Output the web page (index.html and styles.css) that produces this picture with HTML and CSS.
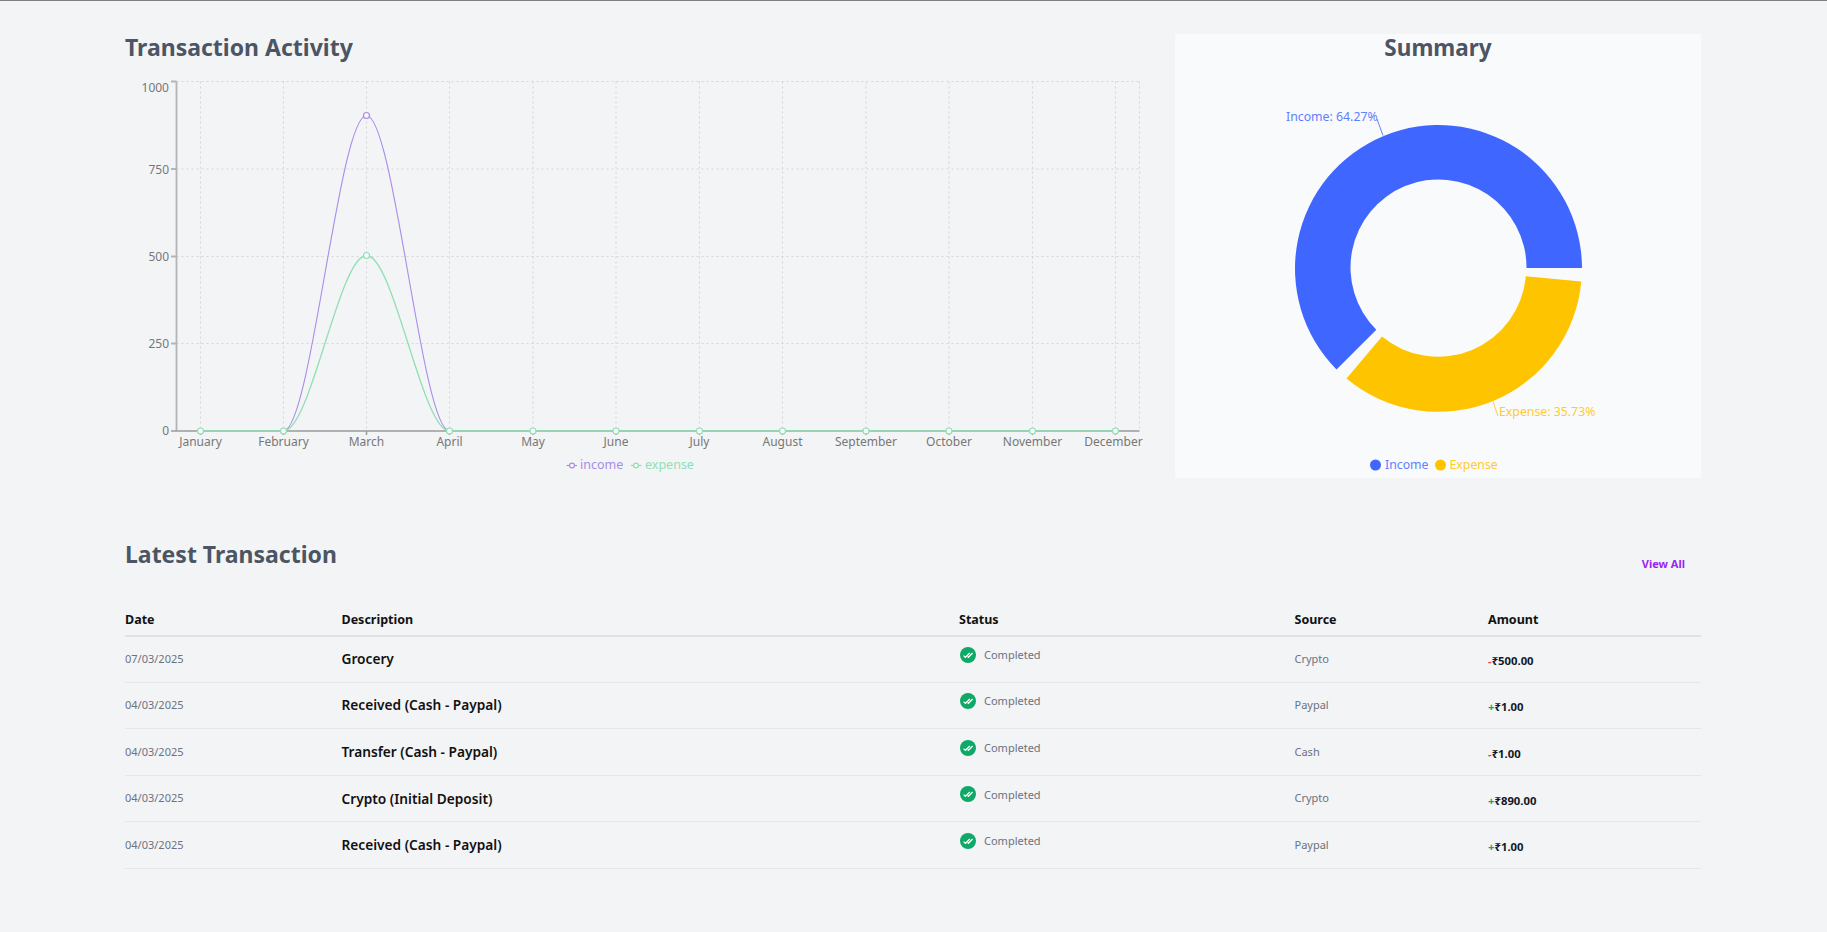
FILE: index.html
```html
<!DOCTYPE html>
<html lang="en">
<head>
<meta charset="utf-8">
<title>Dashboard</title>
<link rel="stylesheet" href="styles.css">
</head>
<body>
<main class="page">
  <section class="charts">
    <div class="activity">
      <h2 class="heading">Transaction Activity</h2>
      <svg class="line-chart" width="1030" height="420" viewBox="125 60 1030 420">
        <g class="grid">
          <path d="M176.5 81.5H1139.5M176.5 169H1139.5M176.5 256.5H1139.5M176.5 343.5H1139.5"/>
          <path d="M200.5 81.5V431M283.5 81.5V431M366.5 81.5V431M449.5 81.5V431M533 81.5V431M616 81.5V431M699.5 81.5V431M782.5 81.5V431M866 81.5V431M949 81.5V431M1032.5 81.5V431M1115.5 81.5V431M1139.5 81.5V431"/>
        </g>
        <g class="axis">
          <path class="axis-y" d="M176.5 81.5V431M171 81.5H176.5M171 169H176.5M171 256.5H176.5M171 343.5H176.5"/>
          <path class="axis-x" d="M171 431H1139.5M200.5 431V435M283.5 431V435M366.5 431V435M449.5 431V435M533 431V435M616 431V435M699.5 431V435M782.5 431V435M866 431V435M949 431V435M1032.5 431V435M1115.5 431V435"/>
        </g>
        <g class="ylabels">
          <text x="169" y="92">1000</text>
          <text x="169" y="174">750</text>
          <text x="169" y="261">500</text>
          <text x="169" y="348">250</text>
          <text x="169" y="435">0</text>
        </g>
        <g class="xlabels">
          <text x="200.5" y="446">January</text>
          <text x="283.5" y="446">February</text>
          <text x="366.5" y="446">March</text>
          <text x="449.5" y="446">April</text>
          <text x="533" y="446">May</text>
          <text x="616" y="446">June</text>
          <text x="699.5" y="446">July</text>
          <text x="782.5" y="446">August</text>
          <text x="866" y="446">September</text>
          <text x="949" y="446">October</text>
          <text x="1032.5" y="446">November</text>
          <text x="1113.5" y="446">December</text>
        </g>
        <path class="line income" d="M283.5 431C311 431 339 115.5 366.5 115.5C394 115.5 422 431 449.5 431"/>
        <path class="line expense" d="M200.5 431H283.5C311 431 339 255.5 366.5 255.5C394 255.5 422 431 449.5 431H1115.5"/>
        <circle class="dot income" cx="366.5" cy="115.5" r="3"/>
        <g class="dot expense">
          <circle cx="366.5" cy="255.5" r="3"/>
          <circle cx="200.5" cy="431" r="3"/>
          <circle cx="283.5" cy="431" r="3"/>
          <circle cx="449.5" cy="431" r="3"/>
          <circle cx="533" cy="431" r="3"/>
          <circle cx="616" cy="431" r="3"/>
          <circle cx="699.5" cy="431" r="3"/>
          <circle cx="782.5" cy="431" r="3"/>
          <circle cx="866" cy="431" r="3"/>
          <circle cx="949" cy="431" r="3"/>
          <circle cx="1032.5" cy="431" r="3"/>
          <circle cx="1115.5" cy="431" r="3"/>
        </g>
        <path class="line income" d="M566.5 465.5H577"/>
        <circle class="dot income" cx="572" cy="465.5" r="2.4"/>
        <text class="legend income-text" x="580" y="469">income</text>
        <path class="line expense" d="M631 465.5H641.5"/>
        <circle class="dot expense" cx="636" cy="465.5" r="2.4"/>
        <text class="legend expense-text" x="645" y="469">expense</text>
      </svg>
    </div>
    <aside class="summary">
      <h2 class="heading summary-title">Summary</h2>
      <svg class="donut" width="526" height="404" viewBox="1175 74 526 404">
        <path class="slice-income" d="M1582 268A143.5 143.5 0 1 0 1336.5 369.5L1376.3 329.7A88 88 0 1 1 1526.5 268Z"/>
        <path class="slice-expense" d="M1581.3 281.4A143.5 143.5 0 0 1 1346.5 378.5L1382 336.6A88 88 0 0 0 1525.8 276.2Z"/>
        <path class="leader-income" d="M1377 119L1383 135.5"/>
        <path class="leader-expense" d="M1493 401.5L1498 416"/>
        <text class="pie-label income-blue" x="1286" y="120.5">Income: 64.27%</text>
        <text class="pie-label expense-yellow" x="1499" y="416">Expense: 35.73%</text>
        <circle class="slice-income" cx="1375.5" cy="465" r="5.5"/>
        <text class="pie-label income-blue" x="1385" y="469">Income</text>
        <circle class="slice-expense" cx="1440.5" cy="465" r="5.5"/>
        <text class="pie-label expense-yellow" x="1449.5" y="469">Expense</text>
      </svg>
    </aside>
  </section>

  <section class="latest">
    <div class="latest-head">
      <h2 class="heading">Latest Transaction</h2>
      <a class="view-all" href="#">View All</a>
    </div>
    <table class="tx-table">
      <colgroup>
        <col class="col-date"><col class="col-desc"><col class="col-status"><col class="col-source"><col class="col-amount">
      </colgroup>
      <thead>
        <tr><th>Date</th><th>Description</th><th>Status</th><th>Source</th><th>Amount</th></tr>
      </thead>
      <tbody>
        <tr>
          <td class="muted">07/03/2025</td><td class="desc">Grocery</td>
          <td><span class="status"><svg class="check" viewBox="0 0 16 16"><circle cx="8" cy="8" r="8"/><path d="M3.6 8.6L5.4 10.4L9.8 6M7.6 9.6L8.4 10.4L12.6 6"/></svg>Completed</span></td>
          <td class="muted">Crypto</td><td class="amount"><span class="minus">-</span>₹500.00</td>
        </tr>
        <tr>
          <td class="muted">04/03/2025</td><td class="desc">Received (Cash - Paypal)</td>
          <td><span class="status"><svg class="check" viewBox="0 0 16 16"><circle cx="8" cy="8" r="8"/><path d="M3.6 8.6L5.4 10.4L9.8 6M7.6 9.6L8.4 10.4L12.6 6"/></svg>Completed</span></td>
          <td class="muted">Paypal</td><td class="amount"><span class="plus">+</span>₹1.00</td>
        </tr>
        <tr>
          <td class="muted">04/03/2025</td><td class="desc">Transfer (Cash - Paypal)</td>
          <td><span class="status"><svg class="check" viewBox="0 0 16 16"><circle cx="8" cy="8" r="8"/><path d="M3.6 8.6L5.4 10.4L9.8 6M7.6 9.6L8.4 10.4L12.6 6"/></svg>Completed</span></td>
          <td class="muted">Cash</td><td class="amount"><span class="minus">-</span>₹1.00</td>
        </tr>
        <tr>
          <td class="muted">04/03/2025</td><td class="desc">Crypto (Initial Deposit)</td>
          <td><span class="status"><svg class="check" viewBox="0 0 16 16"><circle cx="8" cy="8" r="8"/><path d="M3.6 8.6L5.4 10.4L9.8 6M7.6 9.6L8.4 10.4L12.6 6"/></svg>Completed</span></td>
          <td class="muted">Crypto</td><td class="amount"><span class="plus">+</span>₹890.00</td>
        </tr>
        <tr>
          <td class="muted">04/03/2025</td><td class="desc">Received (Cash - Paypal)</td>
          <td><span class="status"><svg class="check" viewBox="0 0 16 16"><circle cx="8" cy="8" r="8"/><path d="M3.6 8.6L5.4 10.4L9.8 6M7.6 9.6L8.4 10.4L12.6 6"/></svg>Completed</span></td>
          <td class="muted">Paypal</td><td class="amount"><span class="plus">+</span>₹1.00</td>
        </tr>
      </tbody>
    </table>
  </section>
</main>
</body>
</html>
```
FILE: styles.css
```css
* { box-sizing: border-box; }
html, body { margin: 0; height: 100%; }
body {
  background: #f3f4f6;
  border-top: 1px solid #808080;
  font-family: "Noto Sans", "Open Sans", sans-serif;
  color: #111;
  overflow: hidden;
}
.page { padding: 33px 126px 0 125px; }
.charts { display: flex; justify-content: space-between; }
.activity { width: 1030px; }
.heading {
  margin: 0;
  font-size: 23px;
  line-height: 26px;
  font-weight: 700;
  color: #4b5563;
}
.activity .heading { height: 26px; }
.line-chart, .donut { display: block; }
.summary { width: 526px; height: 444px; background: #f9fafb; }
.summary-title { text-align: center; height: 40px; font-size: 22.5px; line-height: 27px; }

.grid path { fill: none; stroke: #d6d6d6; stroke-width: 1.1; stroke-dasharray: 2 3; }
.axis path { fill: none; }
.axis-y { stroke: #b4b4b4; stroke-width: 1.8; }
.axis-x { stroke: #9a9a9a; stroke-width: 1.5; }
.ylabels text { font-size: 12px; fill: #777; text-anchor: end; }
.xlabels text { font-size: 12px; fill: #777; text-anchor: middle; }
.line { fill: none; stroke-width: 1.1; }
.line.expense { stroke-width: 1.3; }
.line.income { stroke: #a98be8; }
.line.expense { stroke: #8fe0b4; }
.dot { fill: #f8fafc; stroke-width: 1.2; }
.dot.income { stroke: #a98be8; }
.dot.expense { stroke: #8fe0b4; }
.legend { font-size: 12.5px; }
.income-text { fill: #a98be8; }
.expense-text { fill: #8fe0b4; }
.slice-income { fill: #3f66ff; }
.slice-expense { fill: #ffc400; }
.leader-income { fill: none; stroke: #3f66ff; stroke-width: 0.8; }
.leader-expense { fill: none; stroke: #ffc400; stroke-width: 0.8; }
.pie-label { font-size: 12.3px; }
.income-blue { fill: #5f80ff; }
.expense-yellow { fill: #ffcb2e; }

.latest { margin-top: 61px; }
.latest-head { display: flex; justify-content: space-between; align-items: flex-start; height: 63.6px; padding-right: 16px; }
.view-all { margin-top: 15px; font-size: 11px; font-weight: 700; color: #9b24f5; text-decoration: none; }
.tx-table { width: 1576px; table-layout: fixed; border-collapse: collapse; }
.col-date { width: 216.5px; }
.col-desc { width: 617.5px; }
.col-status { width: 335.5px; }
.col-source { width: 193.5px; }
.col-amount { width: 213px; }
.tx-table th {
  text-align: left;
  padding: 0;
  height: 31px;
  font-size: 12.5px;
  font-weight: 700;
  border-bottom: 2px solid #e0e2e7;
}
.tx-table td {
  padding: 0;
  height: 46.6px;
  border-bottom: 1px solid #e5e7eb;
  vertical-align: middle;
}
.tx-table td.muted { font-size: 11px; color: #6b7280; padding-bottom: 2px; }
.tx-table td.desc { font-size: 13.7px; font-weight: 600; color: #111; padding-bottom: 1px; }
.status { display: flex; align-items: center; gap: 8px; font-size: 11px; color: #6b7280; margin-top: -9px; }
.check { width: 16px; height: 16px; margin-left: 1px; }
.check circle { fill: #10a866; }
.check path { fill: none; stroke: #fff; stroke-width: 1.3; }
.tx-table td.amount { font-size: 11.3px; font-weight: 700; color: #111827; padding-top: 3px; }
.minus { color: #ef4444; }
.plus { color: #10a866; }
```
